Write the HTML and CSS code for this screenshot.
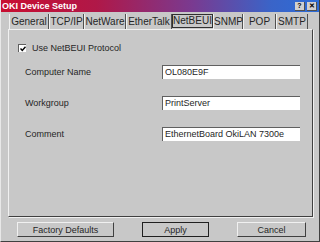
FILE: index.html
```html
<!DOCTYPE html>
<html>
  <head>
    <title>OKI Device Setup</title>
    <link rel="stylesheet" href="styles.css">
  </head>
  <body>
    <div class="window">
      <div class="titlebar">
        <span class="title">OKI Device Setup</span>
        <div class="title-buttons">
          <span class="tb-btn">?</span>
          <span class="tb-btn">&#x2715;</span>
        </div>
      </div>

      <div class="tabs">
        <span class="tab tab-general">General</span>
        <span class="tab tab-tcp">TCP/IP</span>
        <span class="tab tab-netware">NetWare</span>
        <span class="tab tab-ether">EtherTalk</span>
        <span class="tab tab-netbeui active">NetBEUI</span>
        <span class="tab tab-snmp">SNMP</span>
        <span class="tab tab-pop">POP</span>
        <span class="tab tab-smtp">SMTP</span>
      </div>

      <div class="panel">
        <label class="check-row">
          <span class="checkbox">
            <svg width="6" height="6" viewBox="0 0 6 6">
              <path d="M0.5 2.5 L2.3 4.5 L5.5 0.8" fill="none" stroke="#000" stroke-width="1.4"/>
            </svg>
          </span>
          Use NetBEUI Protocol
        </label>

        <div class="field">
          <span class="field-label">Computer Name</span>
          <span class="field-input">OL080E9F</span>
        </div>
        <div class="field">
          <span class="field-label">Workgroup</span>
          <span class="field-input">PrintServer</span>
        </div>
        <div class="field">
          <span class="field-label">Comment</span>
          <span class="field-input">EthernetBoard OkiLAN 7300e</span>
        </div>
      </div>

      <div class="buttons">
        <button class="btn btn-defaults">Factory Defaults</button>
        <button class="btn btn-apply">Apply</button>
        <button class="btn btn-cancel">Cancel</button>
      </div>
    </div>
  </body>
</html>
```

FILE: styles.css
```css
body {
  margin: 0;
  font-family: "Liberation Sans", Arial, sans-serif;
  font-size: 9px;
  color: #262626;
}

.window {
  width: 320px;
  height: 242px;
  box-sizing: border-box;
  background-color: #c8c8c8;
  border-right: 1px solid #404040;
  border-bottom: 1px solid #404040;
  border-left: 1px solid #e8e8e8;
  display: flex;
  flex-direction: column;
}

.titlebar {
  height: 12px;
  display: flex;
  align-items: center;
  justify-content: space-between;
  padding: 0 2px 0 1px;
  background: linear-gradient(to right, #c80e30, #b01848 30%, #7a3a90 60%, #3a64c8 85%, #2c6cd8);
}

.title {
  color: #fff;
  font-weight: bold;
  font-size: 9px;
}

.title-buttons {
  display: flex;
  gap: 2px;
}

.tb-btn {
  width: 9px;
  height: 8px;
  background-color: #d0d0d0;
  border-right: 1px solid #505050;
  border-bottom: 1px solid #505050;
  font-size: 7px;
  font-weight: bold;
  line-height: 8px;
  text-align: center;
  color: #000;
}

.tabs {
  display: flex;
  height: 17px;
  padding-left: 8px;
  align-items: flex-end;
  font-size: 10px;
}

.tab {
  height: 15px;
  line-height: 15px;
  text-align: center;
  box-sizing: border-box;
  border-right: 1px solid #505050;
  border-left: 1px solid #f0f0f0;
}

.tab-general { width: 40px; }
.tab-tcp { width: 35px; }
.tab-netware { width: 42px; }
.tab-ether { width: 46px; }
.tab-netbeui { width: 41px; }
.tab-snmp { width: 30px; }
.tab-pop { width: 33px; }
.tab-smtp { width: 32px; }

.tab.active {
  border: 1px solid #303030;
  height: 14px;
  line-height: 12px;
  margin-bottom: 1px;
}

.panel {
  margin: 0 6px 0 7px;
  height: 188px;
  box-sizing: border-box;
  border-top: 1px solid #f0f0f0;
  border-left: 1px solid #f0f0f0;
  border-right: 1px solid #404040;
  border-bottom: 1px solid #404040;
  box-shadow: 1px 1px 0 #f0f0f0;
  padding: 13px 0 0 9px;
}

.check-row {
  display: flex;
  align-items: center;
  gap: 6px;
  height: 10px;
}

.checkbox {
  width: 8px;
  height: 8px;
  box-sizing: border-box;
  background-color: #fff;
  border-top: 1px solid #606060;
  border-left: 1px solid #606060;
  display: flex;
  align-items: center;
  justify-content: center;
}

.field {
  display: flex;
  align-items: center;
  justify-content: space-between;
  padding: 0 12px 0 7px;
  height: 14px;
  margin-top: 17px;
}

.field:first-of-type {
  margin-top: 12px;
}

.field-input {
  width: 138px;
  height: 14px;
  box-sizing: border-box;
  background-color: #fff;
  border-top: 1px solid #606060;
  border-left: 1px solid #606060;
  padding-left: 2px;
  line-height: 13px;
}

.buttons {
  display: flex;
  justify-content: space-between;
  padding: 5px 13px 0 16px;
}

.btn {
  height: 15px;
  padding: 0;
  font-family: "Liberation Sans", Arial, sans-serif;
  font-size: 9px;
  color: #262626;
  background-color: #c8c8c8;
  border: 1px solid;
  border-color: #f0f0f0 #404040 #404040 #f0f0f0;
}

.btn-defaults { width: 97px; }
.btn-apply { width: 67px; border-color: #202020; }
.btn-cancel { width: 69px; }
```
